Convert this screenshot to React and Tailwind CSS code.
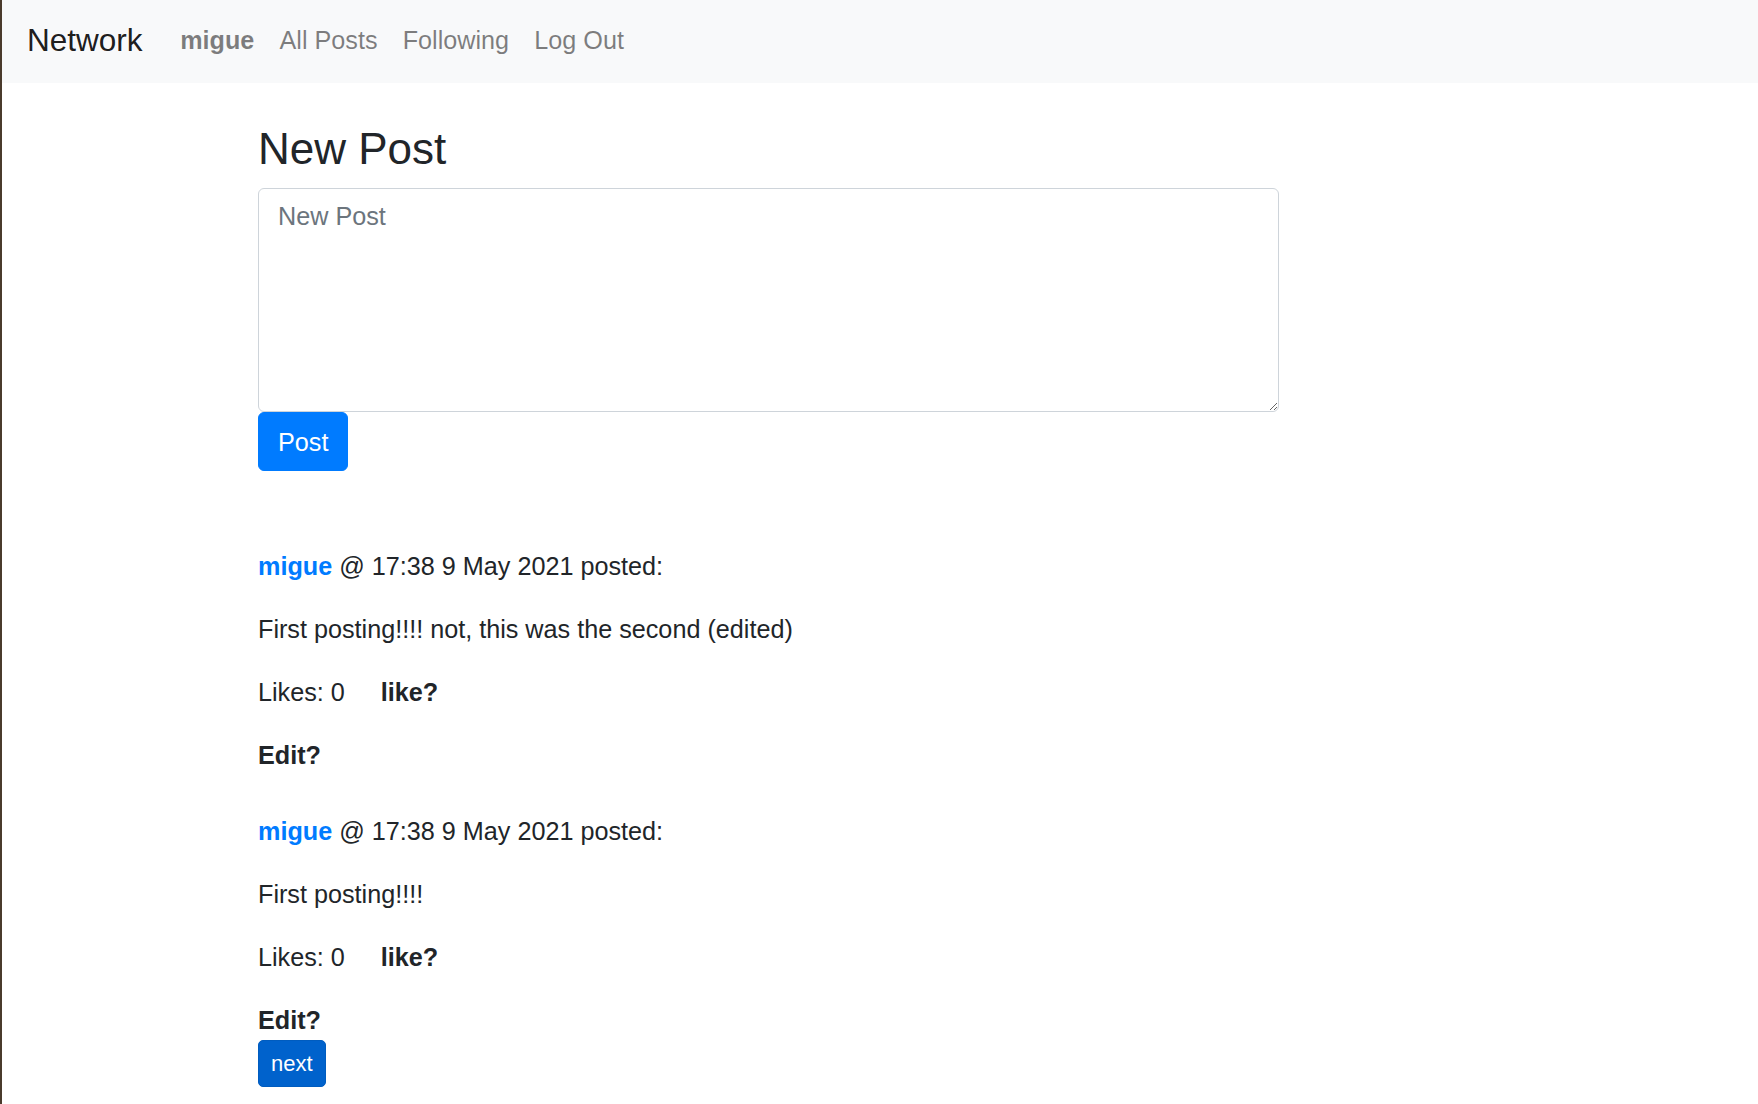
import { useState } from 'react'

const posts = [
  {
    id: 2,
    author: 'migue',
    timestamp: '17:38 9 May 2021',
    content: 'First posting!!!! not, this was the second (edited)',
    likes: 0,
  },
  {
    id: 1,
    author: 'migue',
    timestamp: '17:38 9 May 2021',
    content: 'First posting!!!!',
    likes: 0,
  },
]

function Navbar() {
  return (
    <nav className="flex h-[83px] items-center bg-[#f8f9fa] pb-[3px] pl-[25px]">
      <a href="#" className="mr-[25px] text-[31.5px] leading-[47px] text-[rgba(0,0,0,0.9)]">
        Network
      </a>
      <div className="flex items-center text-[25.2px] leading-[38px] text-[rgba(0,0,0,0.5)]">
        <a href="#" className="px-[12.6px] font-bold">
          migue
        </a>
        <a href="#" className="px-[12.6px]">
          All Posts
        </a>
        <a href="#" className="px-[12.6px]">
          Following
        </a>
        <a href="#" className="px-[12.6px]">
          Log Out
        </a>
      </div>
    </nav>
  )
}

function Post({ post }) {
  return (
    <div className="text-[25.2px] leading-[38px] text-[#212529]">
      <p className="mb-[25px]">
        <a href="#" className="font-bold text-[#007bff]">
          {post.author}
        </a>{' '}
        @ {post.timestamp} posted:
      </p>
      <p className="mb-[25px]">{post.content}</p>
      <p className="mb-[25px]">
        Likes: {post.likes}
        <span className="ml-[36px] font-bold">like?</span>
      </p>
      <p className="font-bold">Edit?</p>
    </div>
  )
}

export default function App() {
  const [text, setText] = useState('')

  return (
    <div className="min-h-[1104px] border-l-2 border-[#4a3b2c] bg-white font-['Liberation_Sans',Arial,sans-serif] text-[#212529]">
      <Navbar />
      <main className="pl-[256px] pt-[39px]">
        <h3 className="mb-[13px] text-[44px] font-medium leading-[53px]">New Post</h3>
        <form onSubmit={(e) => e.preventDefault()}>
          <textarea
            value={text}
            onChange={(e) => setText(e.target.value)}
            placeholder="New Post"
            className="block h-[224px] w-[1021px] rounded-[6px] border border-[#ced4da] px-[19px] pb-[9px] pt-[8px] text-[25.2px] leading-[38px] text-[#495057] outline-none placeholder:text-[#6c757d]"
          />
          <button
            type="submit"
            className="h-[59px] rounded-[6px] border border-[#007bff] bg-[#007bff] px-[19px] text-[25.2px] leading-[38px] text-white"
          >
            Post
          </button>
        </form>

        <div className="mt-[76px] flex flex-col gap-[38px]">
          {posts.map((post) => (
            <Post key={post.id} post={post} />
          ))}
        </div>

        <button
          type="button"
          className="mt-[1px] h-[47px] rounded-[5px] border border-[#005cbf] bg-[#0062cc] px-[12px] text-[22px] leading-[33px] text-white"
        >
          next
        </button>
      </main>
    </div>
  )
}
